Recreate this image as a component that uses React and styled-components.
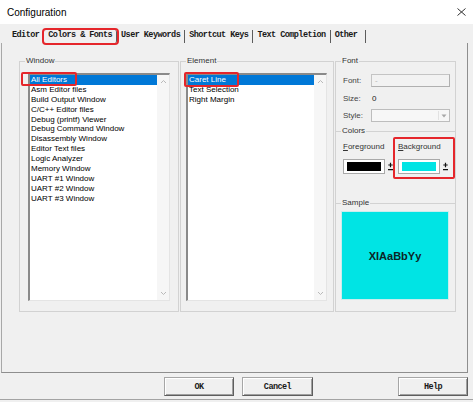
import React from 'react';
import styled, { createGlobalStyle } from 'styled-components';

const GlobalStyle = createGlobalStyle`
  html, body { margin: 0; padding: 0; background: #f0f0f0; }
  body { font-family: "Liberation Sans", Arial, sans-serif; color: #000; }
  * { box-sizing: border-box; }
`;

const Dialog = styled.div`
  width: 473px;
  height: 400px;
  display: flex;
  flex-direction: column;
  background: #f0f0f0;
  border-bottom: 1px solid #a3a3a3;
`;

const TitleBar = styled.div`
  flex: none;
  height: 24px;
  background: #fff;
  display: flex;
  align-items: center;
  padding: 0 7px;
  font-size: 10px;
  color: #000;
`;

const TitleText = styled.span`
  flex: 1;
`;

const CloseIcon = styled.svg`
  width: 9px;
  height: 8px;
`;

const TabStrip = styled.div`
  flex: none;
  height: 19px;
  display: flex;
  align-items: flex-start;
  padding: 6px 0 0 8px;
`;

const Tab = styled.div`
  height: 13px;
  line-height: 14px;
  padding: 0 ${p => (p.$tail ? 8 : 4)}px 0 4px;
  font: bold 8.5px "Liberation Mono", "Courier New", monospace;
  letter-spacing: -0.55px;
  color: #1a1a1a;
  border-right: 1px solid #5c5c5c;
  white-space: pre;
  ${p => p.$marked && `
    outline: 2px solid #e5262b;
    outline-offset: 0px;
    border-radius: 2px;
  `}
`;

const Page = styled.div`
  flex: none;
  height: 330px;
  margin: 0 5px 0 1px;
  border-left: 1px solid #a8a8a8;
  border-right: 1px solid #8e8e8e;
  border-bottom: 1px solid #8e8e8e;
  padding: 13px 0 0 17px;
`;

const Columns = styled.div`
  display: grid;
  grid-template-columns: 160px 154px 121px;
  column-gap: 1px;
  height: 256px;
`;

const Group = styled.fieldset`
  margin: 0;
  min-width: 0;
  padding: 0;
  border: 1px solid #d2d2d2;
  ${p => p.$open && 'border-bottom: none;'}
  ${p => p.$tuck && 'margin-top: -5px;'}
  ${p => p.$grow && 'flex: 1;'}
  ${p => p.$h && `height: ${p.$h}px;`}
  display: flex;
  flex-direction: column;
`;

const Legend = styled.legend`
  margin-left: 5px;
  padding: 0 1px;
  font-size: 8px;
  line-height: 10px;
  color: #333;
`;

const GroupBody = styled.div`
  flex: 1;
  display: flex;
  flex-direction: column;
  padding: ${p => p.$pad};
`;

const RightColumn = styled.div`
  display: flex;
  flex-direction: column;
`;

const ListBox = styled.div`
  flex: 1;
  display: flex;
  background: #fff;
  border-style: solid;
  border-width: 2px 1px 1px 2px;
  border-color: #8a8a8a #e4e4e4 #e4e4e4 #8a8a8a;
`;

const Items = styled.div`
  flex: 1;
`;

const Item = styled.div`
  position: relative;
  height: 9.9px;
  line-height: 9.9px;
  padding-left: 1px;
  font-size: 8px;
  white-space: nowrap;
  ${p => p.$selected && 'background: #0078d7; color: #fff;'}
`;

const Mark = styled.span`
  position: absolute;
  left: ${p => p.$x}px;
  top: ${p => p.$y}px;
  width: ${p => p.$w}px;
  height: ${p => p.$h}px;
  border: 2px solid #e5262b;
  border-radius: 2px;
  pointer-events: none;
`;

const ScrollTrack = styled.div`
  width: 12px;
  background: #f6f6f6;
  display: flex;
  flex-direction: column;
  justify-content: space-between;
  align-items: center;
  padding: 4px 0 4px;
`;

const Arrow = styled.svg`
  width: 7px;
  height: 5px;
`;

const FormStack = styled.div`
  display: flex;
  flex-direction: column;
  gap: 4.5px;
`;

const FormRow = styled.div`
  display: grid;
  grid-template-columns: 28px 79px;
  align-items: center;
  height: 13px;
  font-size: 8px;
  color: #444;
`;

const FlatButton = styled.div`
  height: 13px;
  border: 1px solid #c4c4c4;
  border-right-color: #b0b0b0;
  border-bottom-color: #b0b0b0;
  background: #f2f2f2;
  color: #b4b4b4;
  font-size: 8px;
  line-height: 11px;
  padding-left: 3px;
`;

const Value = styled.span`
  padding-left: 1px;
  color: #222;
`;

const Combo = styled.div`
  height: 13px;
  border: 1px solid #bdbdbd;
  background: #f7f7f7;
  display: flex;
  justify-content: flex-end;
  align-items: stretch;
  padding: 1px;
`;

const ComboArrow = styled.div`
  width: 10px;
  display: flex;
  align-items: center;
  justify-content: center;
  border-left: 1px solid #e2e2e2;
`;

const ColorsRow = styled.div`
  display: flex;
  gap: 3px;
`;

const ColorField = styled.div`
  position: relative;
  width: 52px;
  display: flex;
  flex-direction: column;
  gap: 7px;
`;

const FieldLabel = styled.div`
  font-size: 8px;
  line-height: 10px;
  color: #333;
  white-space: nowrap;
`;

const Swatch = styled.div`
  display: flex;
  height: 15px;
`;

const Well = styled.div`
  width: 42px;
  border: 1px solid #a9a9a9;
  background: #fff;
  padding: 2px 3px;
  display: flex;
`;

const Fill = styled.div`
  flex: 1;
  background: ${p => p.$color};
`;

const DropButton = styled.div`
  width: 10px;
  display: flex;
  align-items: center;
  justify-content: center;
`;

const SampleBox = styled.div`
  flex: 1;
  background: #00e4e4;
  border: 1px solid #c9eded;
  display: flex;
  align-items: center;
  justify-content: center;
  font: bold 11px "Liberation Sans", Arial, sans-serif;
  color: #0c2626;
`;

const ButtonRow = styled.div`
  flex: 1;
  display: flex;
  align-items: flex-start;
  gap: 8px;
  padding: 4px 5px 0 164px;
`;

const PushButton = styled.div`
  width: ${p => p.$w}px;
  height: 19px;
  ${p => p.$push && 'margin-left: auto;'}
  display: flex;
  align-items: center;
  justify-content: center;
  background: #f0f0f0;
  border: 1px solid #a6a6a6;
  border-right-color: #5e5e5e;
  border-bottom-color: #5e5e5e;
  box-shadow: inset 1px 1px 0 #fff, inset -1px -1px 0 #a0a0a0;
  font: bold 8.5px "Liberation Mono", "Courier New", monospace;
  letter-spacing: -0.55px;
  color: #1a1a1a;
`;

const windowItems = [
  'All Editors',
  'Asm Editor files',
  'Build Output Window',
  'C/C++ Editor files',
  'Debug (printf) Viewer',
  'Debug Command Window',
  'Disassembly Window',
  'Editor Text files',
  'Logic Analyzer',
  'Memory Window',
  'UART #1 Window',
  'UART #2 Window',
  'UART #3 Window',
];

const elementItems = ['Caret Line', 'Text Selection', 'Right Margin'];

const UpArrow = () => (
  <Arrow viewBox="0 0 7 5">
    <polyline points="1,4 3.5,1.5 6,4" fill="none" stroke="#b9b9b9" strokeWidth="1" />
  </Arrow>
);

const DownArrow = () => (
  <Arrow viewBox="0 0 7 5">
    <polyline points="1,1 3.5,3.5 6,1" fill="none" stroke="#b9b9b9" strokeWidth="1" />
  </Arrow>
);

const PickerGlyph = () => (
  <svg width="7" height="9" viewBox="0 0 7 9">
    <path d="M3.5 0.8 V5.2 M1.3 3 H5.7 M1 7.6 H6" stroke="#111" strokeWidth="1.2" fill="none" />
  </svg>
);

function List({ items, mark }) {
  return (
    <ListBox>
      <Items>
        {items.map((text, i) => (
          <Item key={text} $selected={i === 0}>
            {text}
            {i === 0 && <Mark $x={mark.x} $y={-3} $w={mark.w} $h={mark.h} />}
          </Item>
        ))}
      </Items>
      <ScrollTrack>
        <UpArrow />
        <DownArrow />
      </ScrollTrack>
    </ListBox>
  );
}

function ColorPicker({ label, hotkey, color, marked }) {
  return (
    <ColorField>
      <FieldLabel>
        <u>{hotkey}</u>
        {label}
      </FieldLabel>
      <Swatch>
        <Well>
          <Fill $color={color} />
        </Well>
        <DropButton>
          <PickerGlyph />
        </DropButton>
      </Swatch>
      {marked && <Mark $x={-5} $y={-5} $w={62} $h={42} />}
    </ColorField>
  );
}

export default function App() {
  return (
    <>
      <GlobalStyle />
      <Dialog>
        <TitleBar>
          <TitleText>Configuration</TitleText>
          <CloseIcon viewBox="0 0 9 8">
            <path d="M0.5 0.5 L8.5 7.5 M8.5 0.5 L0.5 7.5" stroke="#333" strokeWidth="1" fill="none" />
          </CloseIcon>
        </TitleBar>

        <TabStrip>
          <Tab>Editor</Tab>
          <Tab $marked>Colors &amp; Fonts</Tab>
          <Tab>User Keywords</Tab>
          <Tab>Shortcut Keys</Tab>
          <Tab>Text Completion</Tab>
          <Tab $tail>Other</Tab>
        </TabStrip>

        <Page>
          <Columns>
            <Group>
              <Legend>Window</Legend>
              <GroupBody $pad="7px 8px 10px 8px">
                <List items={windowItems} mark={{ x: -9, w: 56, h: 14 }} />
              </GroupBody>
            </Group>

            <Group>
              <Legend>Element</Legend>
              <GroupBody $pad="7px 6px 10px 5px">
                <List items={elementItems} mark={{ x: -4, w: 55, h: 15 }} />
              </GroupBody>
            </Group>

            <RightColumn>
              <Group $open>
                <Legend>Font</Legend>
                <GroupBody $pad="8px 5px 9px 7px">
                  <FormStack>
                    <FormRow>
                      <span>Font:</span>
                      <FlatButton>-</FlatButton>
                    </FormRow>
                    <FormRow>
                      <span>Size:</span>
                      <Value>0</Value>
                    </FormRow>
                    <FormRow>
                      <span>Style:</span>
                      <Combo>
                        <ComboArrow>
                          <svg width="6" height="4" viewBox="0 0 6 4">
                            <path d="M0.5 0.5 H5.5 L3 3.5 Z" fill="#a8a8a8" />
                          </svg>
                        </ComboArrow>
                      </Combo>
                    </FormRow>
                  </FormStack>
                </GroupBody>
              </Group>

              <Group $open $tuck $h={77}>
                <Legend>Colors</Legend>
                <GroupBody $pad="6px 5px 0 7px">
                  <ColorsRow>
                    <ColorPicker hotkey="F" label="oreground" color="#000" />
                    <ColorPicker hotkey="B" label="ackground" color="#00e4e4" marked />
                  </ColorsRow>
                </GroupBody>
              </Group>

              <Group $tuck $grow>
                <Legend>Sample</Legend>
                <GroupBody $pad="3px 6px 11px 5px">
                  <SampleBox>XIAaBbYy</SampleBox>
                </GroupBody>
              </Group>
            </RightColumn>
          </Columns>
        </Page>

        <ButtonRow>
          <PushButton $w={70}>OK</PushButton>
          <PushButton $w={71}>Cancel</PushButton>
          <PushButton $w={70} $push>Help</PushButton>
        </ButtonRow>
      </Dialog>
    </>
  );
}
